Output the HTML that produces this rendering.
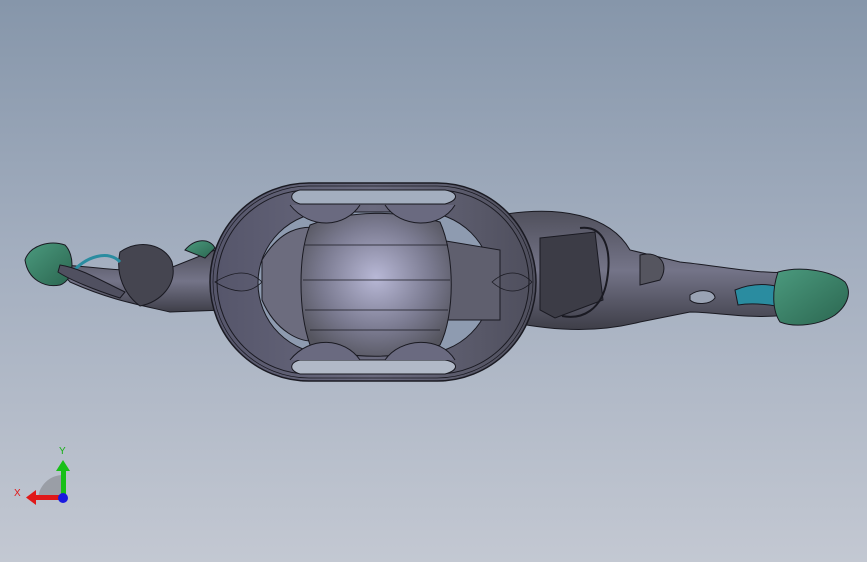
<!DOCTYPE html>
<html><head><meta charset="utf-8"><style>
html,body{margin:0;padding:0}
body{width:867px;height:562px;overflow:hidden;background:linear-gradient(#8696aa 0%,#a3aebf 45%,#c3c8d2 100%);}
svg{display:block}
</style></head><body>
<svg width="867" height="562" viewBox="0 0 867 562" xmlns="http://www.w3.org/2000/svg">
<defs>
<radialGradient id="ball" cx="0.5" cy="0.45" r="0.6">
<stop offset="0" stop-color="#b8b8d6"/><stop offset="0.6" stop-color="#7c7c92"/><stop offset="1" stop-color="#55555f"/>
</radialGradient>
<linearGradient id="ring" x1="0" y1="0" x2="1" y2="0">
<stop offset="0" stop-color="#55556a"/><stop offset="0.5" stop-color="#6a6a7e"/><stop offset="1" stop-color="#4e4e5c"/>
</linearGradient>
<linearGradient id="arm" x1="0" y1="0" x2="0" y2="1">
<stop offset="0" stop-color="#50505c"/><stop offset="0.5" stop-color="#747488"/><stop offset="1" stop-color="#3e3e48"/>
</linearGradient>
<linearGradient id="grn" x1="0" y1="0" x2="1" y2="1">
<stop offset="0" stop-color="#4b9a7e"/><stop offset="1" stop-color="#2b6650"/>
</linearGradient>
</defs>
<g stroke="#1a1a22" stroke-width="1">
<!-- right arm -->
<path d="M500 215 C560 205 610 215 630 250 L680 262 C720 266 760 275 800 272 L805 312 C760 322 720 312 690 312 L640 322 C600 332 560 332 510 322 Z" fill="url(#arm)"/>
<path d="M540 238 L595 232 L603 300 L555 318 L540 310 Z" fill="#3c3c46"/>
<path d="M580 228 C605 225 612 250 607 280 C602 310 582 320 562 316" fill="none" stroke-width="2"/>
<path d="M640 255 C660 250 670 265 660 280 L640 285 Z" fill="#55555f"/>
<path d="M690 295 C700 288 715 290 715 298 C710 305 695 305 690 300Z" fill="#9aa3b4"/>
<path d="M735 290 C760 280 780 285 800 295 L795 310 C775 305 755 302 738 305Z" fill="#2a8ca0"/>
<path d="M778 272 C800 266 830 270 845 282 C852 292 848 305 835 315 C820 325 795 328 780 322 C772 310 772 290 778 272Z" fill="url(#grn)"/>
<!-- left arm -->
<path d="M55 265 C90 265 130 275 170 268 L215 250 L225 310 L170 312 C140 305 110 300 70 282Z" fill="url(#arm)"/>
<path d="M120 252 C140 238 165 245 172 262 C178 285 160 302 140 306 C125 295 115 275 120 252Z" fill="#454550"/>
<path d="M25 260 C30 245 50 240 65 245 C75 255 75 280 60 285 C45 288 28 280 25 260Z" fill="url(#grn)"/>
<path d="M70 275 C85 255 110 250 120 262" fill="none" stroke="#2a8ca0" stroke-width="3"/>
<path d="M185 250 C195 238 210 238 215 248 L205 258Z" fill="url(#grn)"/>
<path d="M60 265 C80 268 100 280 125 292 L120 298 C95 290 70 280 58 272Z" fill="#505060"/>
<!-- big ring -->
<rect x="210" y="183" width="326" height="198" rx="99" fill="url(#ring)" stroke-width="1.5"/>
<rect x="213" y="186" width="320" height="192" rx="96" fill="none" stroke-width="0.7"/>
<rect x="217" y="190" width="312" height="184" rx="92" fill="none"/>
<rect x="258" y="212" width="234" height="142" rx="71" fill="#8e9bb0"/>
<!-- slots -->
<path d="M300 190 L445 190 C458 192 460 200 445 204 L300 204 C288 200 290 192 300 190Z" fill="#a3aebf"/>
<path d="M300 360 L445 360 C458 362 460 370 445 374 L300 374 C288 370 290 362 300 360Z" fill="#b1b9c7"/>
<!-- interior -->
<path d="M262 260 C280 230 300 225 320 228 L320 340 C300 345 275 330 262 300Z" fill="#6c6c7e"/>
<path d="M440 240 L500 250 L500 320 L440 320Z" fill="#5f5f6e"/>
<path d="M310 225 C350 210 400 210 440 222 C455 255 455 315 440 345 C400 360 350 360 310 345 C298 310 298 255 310 225Z" fill="url(#ball)"/>
<path d="M305 245 L448 245 M303 280 L450 280 M305 310 L448 310 M310 330 L440 330" stroke-width="0.8"/>
<path d="M290 205 C310 230 345 228 360 205 M385 205 C400 228 440 230 455 205" fill="#6a6a80"/>
<path d="M290 360 C310 335 345 338 360 360 M385 360 C400 338 440 335 455 360" fill="#6a6a80"/>
<path d="M215 282 C235 270 250 270 262 282 C250 294 235 294 215 282Z M492 282 C505 270 520 270 532 282 C520 294 505 294 492 282Z" fill="none" stroke-width="0.8"/>
</g>
<!-- triad -->
<path d="M38 500 A25 25 0 0 1 63 475 L63 500Z" fill="#9a9ea6"/>
<rect x="61" y="470" width="5" height="30" fill="#18c018"/>
<path d="M56 471 L63 460 L70 471Z" fill="#18c018"/>
<rect x="34" y="495" width="28" height="5" fill="#e01818"/>
<path d="M36 490 L26 497.5 L36 505Z" fill="#e01818"/>
<circle cx="63" cy="498" r="5" fill="#1a1ae0"/>
<text x="59" y="454" font-family="Liberation Sans, sans-serif" font-size="10" fill="#18b018">Y</text>
<text x="14" y="496" font-family="Liberation Sans, sans-serif" font-size="10" fill="#e01818">X</text>
</svg>
</body></html>
